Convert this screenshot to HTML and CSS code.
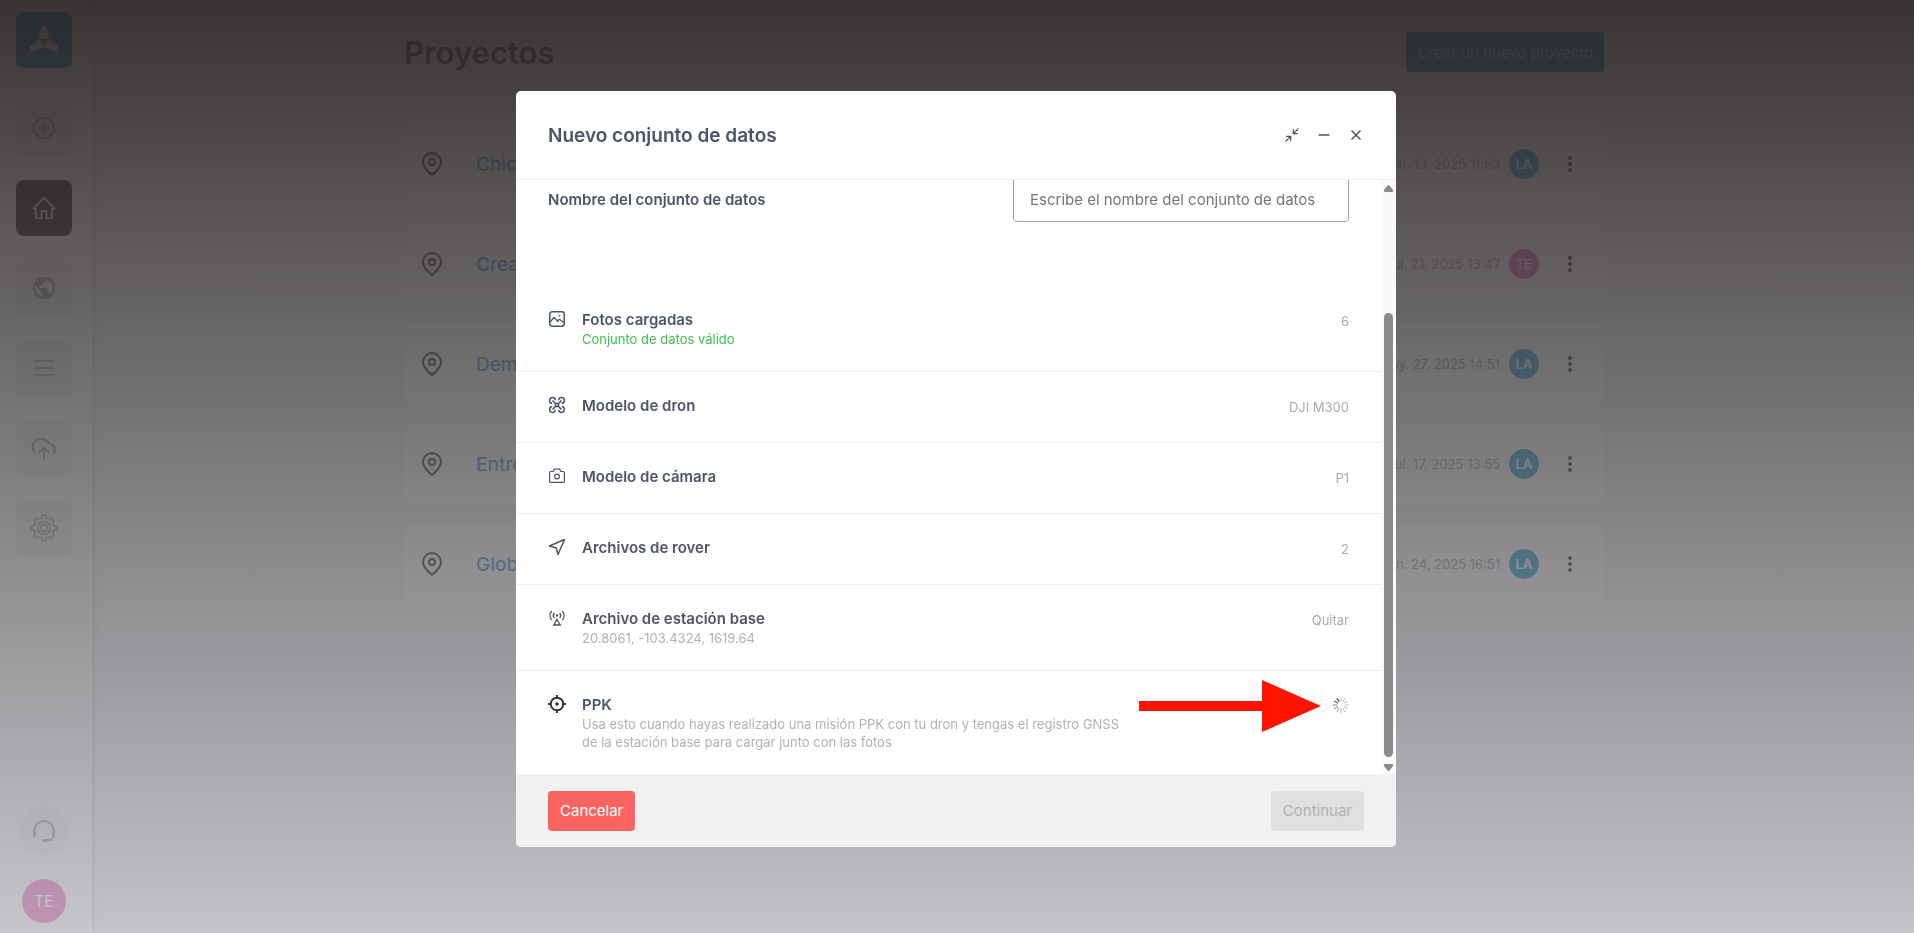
FILE: index.html
```html
<!DOCTYPE html>
<html lang="es">

<head>
    <meta charset="utf-8">
    <meta name="viewport" content="width=device-width">
    <title>Proyectos</title>
    <link rel="stylesheet" href="styles.css">
</head>

<body>
    <div class="app">
        <nav class="sidebar">
            <a class="logo" href="#" aria-label="Inicio">
                <svg width="32" height="32" viewBox="0 0 32 32" fill="currentColor" stroke="currentColor" stroke-width="2" stroke-linejoin="round">
                    <path d="M14.300 3h3.400l2 11h-7.400z" />
                    <path d="M14.300 3h3.400l2 11h-7.400z" transform="rotate(120 16 17.500)" />
                    <path d="M14.300 3h3.400l2 11h-7.400z" transform="rotate(240 16 17.500)" />
                </svg>
            </a>
            <button class="nav-item" aria-label="Crear">
                <svg width="24" height="24" viewBox="0 0 24 24" fill="none" stroke="currentColor" stroke-width="1.600" stroke-linecap="round">
                    <circle cx="12" cy="12" r="10" />
                    <path d="M12 7v10M7 12h10" />
                </svg>
            </button>
            <button class="nav-item active" aria-label="Proyectos">
                <svg width="24" height="24" viewBox="0 0 24 24" fill="none" stroke="currentColor" stroke-width="1.600" stroke-linejoin="round">
                    <path d="M1.500 12.500L12 1.800l10.500 10.700H20V22.200h-5.500V15h-5v7.200H4v-9.700z" />
                </svg>
            </button>
            <button class="nav-item" aria-label="Mapa">
                <svg width="24" height="24" viewBox="0 0 24 24" fill="currentColor">
                    <path d="M12 1C5.900 1 1 5.900 1 12s4.900 11 11 11 11-4.900 11-11S18.100 1 12 1zm-1.100 19.700C6.600 20.200 3.200 16.500 3.200 12c0-.7.1-1.300.2-2l5.300 5.300v1.100c0 1.200 1 2.200 2.200 2.200zm7.600-2.800c-.3-.9-1.100-1.500-2.100-1.500h-1.100v-3.300c0-.6-.5-1.100-1.100-1.100H7.600V9.800h2.200c.6 0 1.100-.5 1.100-1.100V6.500h2.200c1.200 0 2.200-1 2.200-2.200v-.5c3.200 1.300 5.500 4.500 5.500 8.200 0 2.300-.9 4.400-2.300 5.900z" />
                </svg>
            </button>
            <button class="nav-item" aria-label="Tareas">
                <svg width="24" height="24" viewBox="0 0 24 24" fill="none" stroke="currentColor" stroke-width="1.600" stroke-linecap="round">
                    <path d="M3 5h18M3 12h18M3 19h18" />
                </svg>
            </button>
            <button class="nav-item" aria-label="Subir">
                <svg width="28" height="28" viewBox="0 0 28 28" fill="none" stroke="currentColor" stroke-width="1.800" stroke-linecap="round" stroke-linejoin="round">
                    <path d="M4.500 18.500A8.500 8.500 0 1 1 18.800 9.600a6 6 0 0 1 5 9.600M14 25V14M9 18.500l5-5 5 5" />
                </svg>
            </button>
            <button class="nav-item" aria-label="Ajustes">
                <svg width="28" height="28" viewBox="0 0 28 28" fill="none" stroke="currentColor" stroke-width="1.300" stroke-linejoin="round">
                    <path d="M11.900 4.100L12.500 1h3l.6 3.100 3.400 1.400 2.600-1.800 2.200 2.200-1.800 2.600 1.400 3.400 3.100.6v3l-3.100.6-1.400 3.400 1.800 2.600-2.200 2.200-2.600-1.800-3.400 1.400-.6 3.100h-3l-.6-3.100-3.400-1.400-2.600 1.800-2.200-2.200 1.800-2.600-1.400-3.400L1 15.500v-3l3.100-.6 1.400-3.400-1.800-2.600 2.200-2.200 2.600 1.800z" />
                    <circle cx="14" cy="14" r="6.500" />
                    <circle cx="14" cy="14" r="3.500" />
                </svg>
            </button>
            <button class="support" aria-label="Soporte">
                <svg width="24" height="24" viewBox="0 0 24 24" fill="none" stroke="currentColor" stroke-width="2">
                    <path d="M2.500 13v-1.500a9.500 9.500 0 0 1 19 0V17a4 4 0 0 1-4 4H14" />
                    <path d="M2.500 13v4M21.500 13v4M11.500 21.500h3" stroke-width="3" stroke-linecap="round" />
                </svg>
            </button>
            <button class="user" aria-label="Cuenta">TE</button>
        </nav>

        <main class="main">
            <header class="page-header">
                <h1>Proyectos</h1>
                <button class="create">Crear un nuevo proyecto</button>
            </header>
            <ul class="projects">
                <li class="project">
                    <svg class="pin" width="24" height="24" viewBox="0 0 24 24"><path d="M21 10c0 6-9 13-9 13S3 16 3 10a9 9 0 0 1 18 0z" /><circle cx="12" cy="10" r="3" /></svg>
                    <a href="#">Chica</a>
                    <span class="date">jun. 13, 2025 11:53</span>
                    <span class="avatar">LA</span>
                    <button class="more" aria-label="Opciones"><i></i><i></i><i></i></button>
                </li>
                <li class="project">
                    <svg class="pin" width="24" height="24" viewBox="0 0 24 24"><path d="M21 10c0 6-9 13-9 13S3 16 3 10a9 9 0 0 1 18 0z" /><circle cx="12" cy="10" r="3" /></svg>
                    <a href="#">Crea</a>
                    <span class="date">jul. 21, 2025 13:47</span>
                    <span class="avatar pink">TE</span>
                    <button class="more" aria-label="Opciones"><i></i><i></i><i></i></button>
                </li>
                <li class="project">
                    <svg class="pin" width="24" height="24" viewBox="0 0 24 24"><path d="M21 10c0 6-9 13-9 13S3 16 3 10a9 9 0 0 1 18 0z" /><circle cx="12" cy="10" r="3" /></svg>
                    <a href="#">Demo</a>
                    <span class="date">may. 27, 2025 14:51</span>
                    <span class="avatar">LA</span>
                    <button class="more" aria-label="Opciones"><i></i><i></i><i></i></button>
                </li>
                <li class="project">
                    <svg class="pin" width="24" height="24" viewBox="0 0 24 24"><path d="M21 10c0 6-9 13-9 13S3 16 3 10a9 9 0 0 1 18 0z" /><circle cx="12" cy="10" r="3" /></svg>
                    <a href="#">Entre</a>
                    <span class="date">jul. 17, 2025 13:55</span>
                    <span class="avatar">LA</span>
                    <button class="more" aria-label="Opciones"><i></i><i></i><i></i></button>
                </li>
                <li class="project">
                    <svg class="pin" width="24" height="24" viewBox="0 0 24 24"><path d="M21 10c0 6-9 13-9 13S3 16 3 10a9 9 0 0 1 18 0z" /><circle cx="12" cy="10" r="3" /></svg>
                    <a href="#">Glob</a>
                    <span class="date">jun. 24, 2025 16:51</span>
                    <span class="avatar">LA</span>
                    <button class="more" aria-label="Opciones"><i></i><i></i><i></i></button>
                </li>
            </ul>
        </main>
    </div>

    <div class="overlay">
        <section class="modal" role="dialog" aria-labelledby="modal-title">
            <header class="modal-header">
                <h2 id="modal-title">Nuevo conjunto de datos</h2>
                <div class="window-buttons">
                    <button aria-label="Contraer">
                        <svg width="16" height="16" viewBox="0 0 16 16" fill="none" stroke="currentColor" stroke-width="1.300">
                            <path d="M14.500 1.500L9.500 6.500M9.300 2.200v4.500h4.500M1.500 14.500l5-5M2.200 9.300h4.500v4.500" />
                        </svg>
                    </button>
                    <button aria-label="Minimizar">
                        <svg width="16" height="16" viewBox="0 0 16 16" fill="none" stroke="currentColor" stroke-width="1.500">
                            <path d="M2.500 8h11" />
                        </svg>
                    </button>
                    <button aria-label="Cerrar">
                        <svg width="16" height="16" viewBox="0 0 16 16" fill="none" stroke="currentColor" stroke-width="1.500">
                            <path d="M3.500 3.500l9 9M12.500 3.500l-9 9" />
                        </svg>
                    </button>
                </div>
            </header>

            <div class="modal-body">
                <div class="content">
                    <div class="name-row">
                        <label for="name">Nombre del conjunto de datos</label>
                        <input type="text" id="name" name="name" placeholder="Escribe el nombre del conjunto de datos">
                    </div>
                    <div class="row">
                        <svg class="icon" width="18" height="18" viewBox="0 0 18 18" stroke-width="1.500">
                            <rect x="1.750" y="1.750" width="14.500" height="14.500" rx="2.500" />
                            <path d="M2 12l4-4.500 4.500 4.500M9.500 10.800l2-1.500 4.500 3.500" stroke-width="1.300" />
                            <circle cx="11.500" cy="5.800" r=".5" stroke-width="1" />
                        </svg>
                        <div class="info">
                            <h3>Fotos cargadas</h3>
                            <p class="valid">Conjunto de datos válido</p>
                        </div>
                        <span class="value">6</span>
                    </div>
                    <div class="row">
                        <svg class="icon" width="18" height="18" viewBox="0 0 18 18" stroke-width="1.500">
                            <path d="M4.300 7.400A2.900 2.900 0 1 1 7.400 4.300M10.600 4.300a2.900 2.900 0 1 1 3.100 3.100M13.700 10.600a2.900 2.900 0 1 1-3.100 3.100M7.400 13.700a2.900 2.900 0 1 1-3.100-3.100" />
                            <path d="M4.500 4.500l3 3h3l3-3M4.500 13.500l3-3h3l3 3M7.500 7.500v3M10.500 7.500v3" stroke-width="1.600" />
                        </svg>
                        <div class="info">
                            <h3>Modelo de dron</h3>
                        </div>
                        <span class="value">DJI M300</span>
                    </div>
                    <div class="row">
                        <svg class="icon" width="18" height="18" viewBox="0 0 18 18" stroke-width="1.200">
                            <path d="M2.600 4.500h2.600l1-2.300h5.600l1 2.300h2.600q1 0 1 1v8.800q0 1-1 1H2.600q-1 0-1-1V5.500q0-1 1-1z" />
                            <circle cx="9" cy="9.500" r="2.400" />
                        </svg>
                        <div class="info">
                            <h3>Modelo de cámara</h3>
                        </div>
                        <span class="value">P1</span>
                    </div>
                    <div class="row">
                        <svg class="icon" width="18" height="18" viewBox="0 0 18 18" stroke-width="1.500" stroke-linejoin="round">
                            <path d="M16.500 1.500L10 16.500 8.300 10 1.500 8z" />
                        </svg>
                        <div class="info">
                            <h3>Archivos de rover</h3>
                        </div>
                        <span class="value">2</span>
                    </div>
                    <div class="row">
                        <svg class="icon" width="18" height="18" viewBox="0 0 18 18" stroke-width="1.400">
                            <path d="M3.700 2a7 7 0 0 0 0 9M14.300 2a7 7 0 0 1 0 9M6.300 4a4 4 0 0 0 0 5M11.700 4a4 4 0 0 1 0 5" />
                            <path d="M9 10.500l3.200 5.500H5.800z" />
                            <circle cx="9" cy="6.500" r=".6" />
                        </svg>
                        <div class="info">
                            <h3>Archivo de estación base</h3>
                            <p>20.8061, -103.4324, 1619.64</p>
                        </div>
                        <button class="value">Quitar</button>
                    </div>
                    <div class="row">
                        <svg class="icon dark" width="18" height="18" viewBox="0 0 18 18" stroke-width="1.900">
                            <circle cx="9" cy="9" r="6.300" />
                            <path d="M9 0v3.500M9 14.500V18M0 9h3.500M14.500 9H18" />
                            <circle cx="9" cy="9" r="1.300" fill="currentColor" stroke-width="1" />
                        </svg>
                        <div class="info">
                            <h3>PPK</h3>
                            <p>Usa esto cuando hayas realizado una misión PPK con tu dron y tengas el registro GNSS de la estación base para cargar junto con las fotos</p>
                        </div>
                        <svg class="arrow" width="182" height="52" viewBox="0 0 182 52">
                            <path d="M0 21h123V0l59 26-59 26V31H0z" />
                        </svg>
                        <svg class="spinner" width="16" height="16" viewBox="-8 -8 16 16" stroke="#444" stroke-width="1.200" stroke-linecap="round">
                            <path d="M0-4v-3.500" opacity=".3" />
                            <path d="M0-4v-3.500" opacity=".3" transform="rotate(30)" />
                            <path d="M0-4v-3.500" opacity=".3" transform="rotate(60)" />
                            <path d="M0-4v-3.500" opacity=".3" transform="rotate(90)" />
                            <path d="M0-4v-3.500" opacity=".3" transform="rotate(120)" />
                            <path d="M0-4v-3.500" opacity=".3" transform="rotate(150)" />
                            <path d="M0-4v-3.500" opacity=".35" transform="rotate(180)" />
                            <path d="M0-4v-3.500" opacity=".45" transform="rotate(210)" />
                            <path d="M0-4v-3.500" opacity=".55" transform="rotate(240)" />
                            <path d="M0-4v-3.500" opacity=".7" transform="rotate(270)" />
                            <path d="M0-4v-3.500" opacity=".85" transform="rotate(300)" />
                            <path d="M0-4v-3.500" transform="rotate(330)" />
                        </svg>
                    </div>
                </div>
                <div class="scrollbar">
                    <svg width="9" height="7" viewBox="0 0 9 7"><path d="M4 .5h1L8.500 5v1.500h-8V5z" /></svg>
                    <div class="track">
                        <div class="thumb"></div>
                    </div>
                    <svg width="9" height="7" viewBox="0 0 9 7"><path d="M4 6.500h1L8.500 2V.5h-8V2z" /></svg>
                </div>
            </div>

            <footer class="modal-footer">
                <button class="cancel">Cancelar</button>
                <button class="continue" disabled>Continuar</button>
            </footer>
        </section>
    </div>
</body>

</html>
```
FILE: styles.css
```css
* {
    box-sizing: border-box;
}

body {
    margin: 0;
    font-family: Inter, "Liberation Sans", sans-serif;
    font-size: 15px;
    color: #4a5568;
    background: #f5f5f7;
}

h1,
h2,
h3,
p,
ul {
    margin: 0;
    padding: 0;
}

button {
    border: none;
    padding: 0;
    font: inherit;
    color: inherit;
    background: none;
}

/* page behind the dialog */
.app {
    display: flex;
    height: 100vh;
}

.sidebar {
    display: flex;
    flex-direction: column;
    align-items: center;
    gap: 24px;
    width: 92px;
    margin-right: 2px;
    padding: 12px 20px 10px 16px;
    background: #fff;
    box-shadow: 0 0 8px rgba(0, 0, 0, 0.2);
}

.logo,
.nav-item,
.support,
.user {
    display: flex;
    flex-shrink: 0;
    align-items: center;
    justify-content: center;
}

.logo {
    width: 56px;
    height: 56px;
    margin-bottom: 8px;
    border-radius: 8px;
    color: #fff;
    background: #0085b8;
}

.nav-item {
    width: 56px;
    height: 56px;
    border-radius: 8px;
    color: #8d8d92;
    background: #eeeeef;
}

.nav-item.active {
    color: #fff;
    background: #00000f;
}

.support {
    width: 48px;
    height: 48px;
    margin-top: auto;
    border-radius: 50%;
    color: #a0a0a5;
    background: #f3f3f6;
}

.user {
    width: 44px;
    height: 44px;
    border-radius: 50%;
    font-size: 16px;
    color: #fff;
    background: #e878bb;
}

.main {
    flex: 1;
    max-width: 1200px;
    margin: 0 auto;
}

.page-header {
    display: flex;
    align-items: center;
    justify-content: space-between;
    height: 104px;
}

.page-header h1 {
    font-size: 31px;
    font-weight: 600;
    color: #3c3c44;
}

.create {
    height: 40px;
    padding: 0 11px;
    border-radius: 4px;
    color: #d0d0d0;
    background: #0085b8;
}

.projects {
    display: flex;
    flex-direction: column;
    gap: 20px;
    padding-top: 20px;
    list-style: none;
}

.project {
    display: flex;
    align-items: center;
    height: 80px;
    padding: 0 22px 0 16px;
    border-radius: 10px;
    background: #fff;
}

.project a {
    margin-left: 32px;
    font-size: 19px;
    font-weight: 500;
    color: #0a8fc0;
    text-decoration: none;
}

.pin {
    fill: none;
    stroke: #1a1a20;
    stroke-width: 2;
}

.date {
    margin-left: auto;
    font-size: 13px;
    color: #8c8c94;
}

.avatar {
    display: flex;
    align-items: center;
    justify-content: center;
    width: 30px;
    height: 30px;
    margin: 0 19px 0 9px;
    border-radius: 50%;
    font-size: 13px;
    font-weight: 700;
    color: #fff;
    background: #0097cc;
}

.avatar.pink {
    font-weight: 400;
    background: #e050a5;
}

.more {
    display: flex;
    flex-direction: column;
    align-items: center;
    gap: 2px;
    width: 24px;
}

.more i {
    width: 4px;
    height: 4px;
    border-radius: 50%;
    background: #101020;
}

/* dialog */
.overlay {
    position: fixed;
    inset: 0;
    display: flex;
    align-items: center;
    justify-content: center;
    padding: 91px 18px 86px 16px;
    background: linear-gradient(rgba(42, 37, 36, 0.93), rgba(167, 167, 174, 0.64));
}

.modal {
    display: flex;
    flex-direction: column;
    width: 100%;
    max-width: 880px;
    height: 100%;
    border-radius: 5px;
    overflow: hidden;
    background: #fff;
}

.modal-header {
    display: flex;
    flex-shrink: 0;
    align-items: center;
    justify-content: space-between;
    height: 89px;
    padding: 0 32px;
    border-bottom: 1px solid #ededed;
}

.modal-header h2 {
    font-size: 19px;
    font-weight: 600;
}

.window-buttons {
    display: flex;
    gap: 16px;
}

.window-buttons button {
    display: flex;
}

.modal-body {
    display: flex;
    flex: 1;
    min-height: 0;
}

/* scrolled to its end, so the rows rest on the bottom edge */
.content {
    display: flex;
    flex: 1;
    flex-direction: column;
    justify-content: flex-end;
    overflow: hidden;
}

.name-row {
    display: flex;
    flex-shrink: 0;
    align-items: center;
    justify-content: space-between;
    padding: 0 32px;
    margin-bottom: 64px;
}

.name-row label {
    font-weight: 600;
}

.name-row input {
    width: 336px;
    height: 46px;
    padding: 0 16px;
    border: 1px solid #a0a0a0;
    border-radius: 4px;
    font: inherit;
}

.name-row input::placeholder {
    color: #757575;
}

.row {
    position: relative;
    display: flex;
    flex-shrink: 0;
    align-items: flex-start;
    gap: 16px;
    min-height: 71px;
    padding: 24px 32px 23px;
    border-bottom: 1px solid #ededed;
}

.row:last-child {
    border-bottom: none;
}

.icon {
    flex-shrink: 0;
    fill: none;
    stroke: currentColor;
}

.icon.dark {
    color: #2d3748;
}

.info {
    flex: 1;
}

.info h3 {
    font-size: 15px;
    font-weight: 600;
    line-height: 20px;
}

.info p {
    max-width: 540px;
    font-size: 13px;
    line-height: 18px;
    color: #b0b2b5;
}

.info .valid {
    color: #3fbf50;
}

.value {
    font-size: 13px;
    line-height: 22px;
    color: #a9abae;
}

.arrow {
    position: absolute;
    top: 9px;
    right: 60px;
    fill: #ff1200;
}

.spinner {
    margin-top: 2px;
}

.scrollbar {
    display: flex;
    flex-direction: column;
    align-items: center;
    gap: 7px;
    width: 15px;
    padding: 5px 0 3px;
    background: #fafafa;
}

.scrollbar svg {
    flex-shrink: 0;
    fill: #8b8b8b;
    stroke: #8b8b8b;
    stroke-linejoin: round;
}

.track {
    display: flex;
    flex: 1;
    flex-direction: column;
    justify-content: flex-end;
}

.thumb {
    width: 9px;
    height: 79.5%;
    border-radius: 5px;
    background: #8b8b8b;
}

.modal-footer {
    display: flex;
    flex-shrink: 0;
    align-items: center;
    justify-content: space-between;
    height: 73px;
    padding: 0 32px;
    background: #f1f1f1;
}

.modal-footer button {
    height: 40px;
    padding: 0 12px;
    border-radius: 4px;
}

.modal-footer .cancel {
    color: #fff;
    background: #fa6460;
}

.modal-footer .continue {
    color: #b0b2b5;
    background: #e0e0e0;
}
```
